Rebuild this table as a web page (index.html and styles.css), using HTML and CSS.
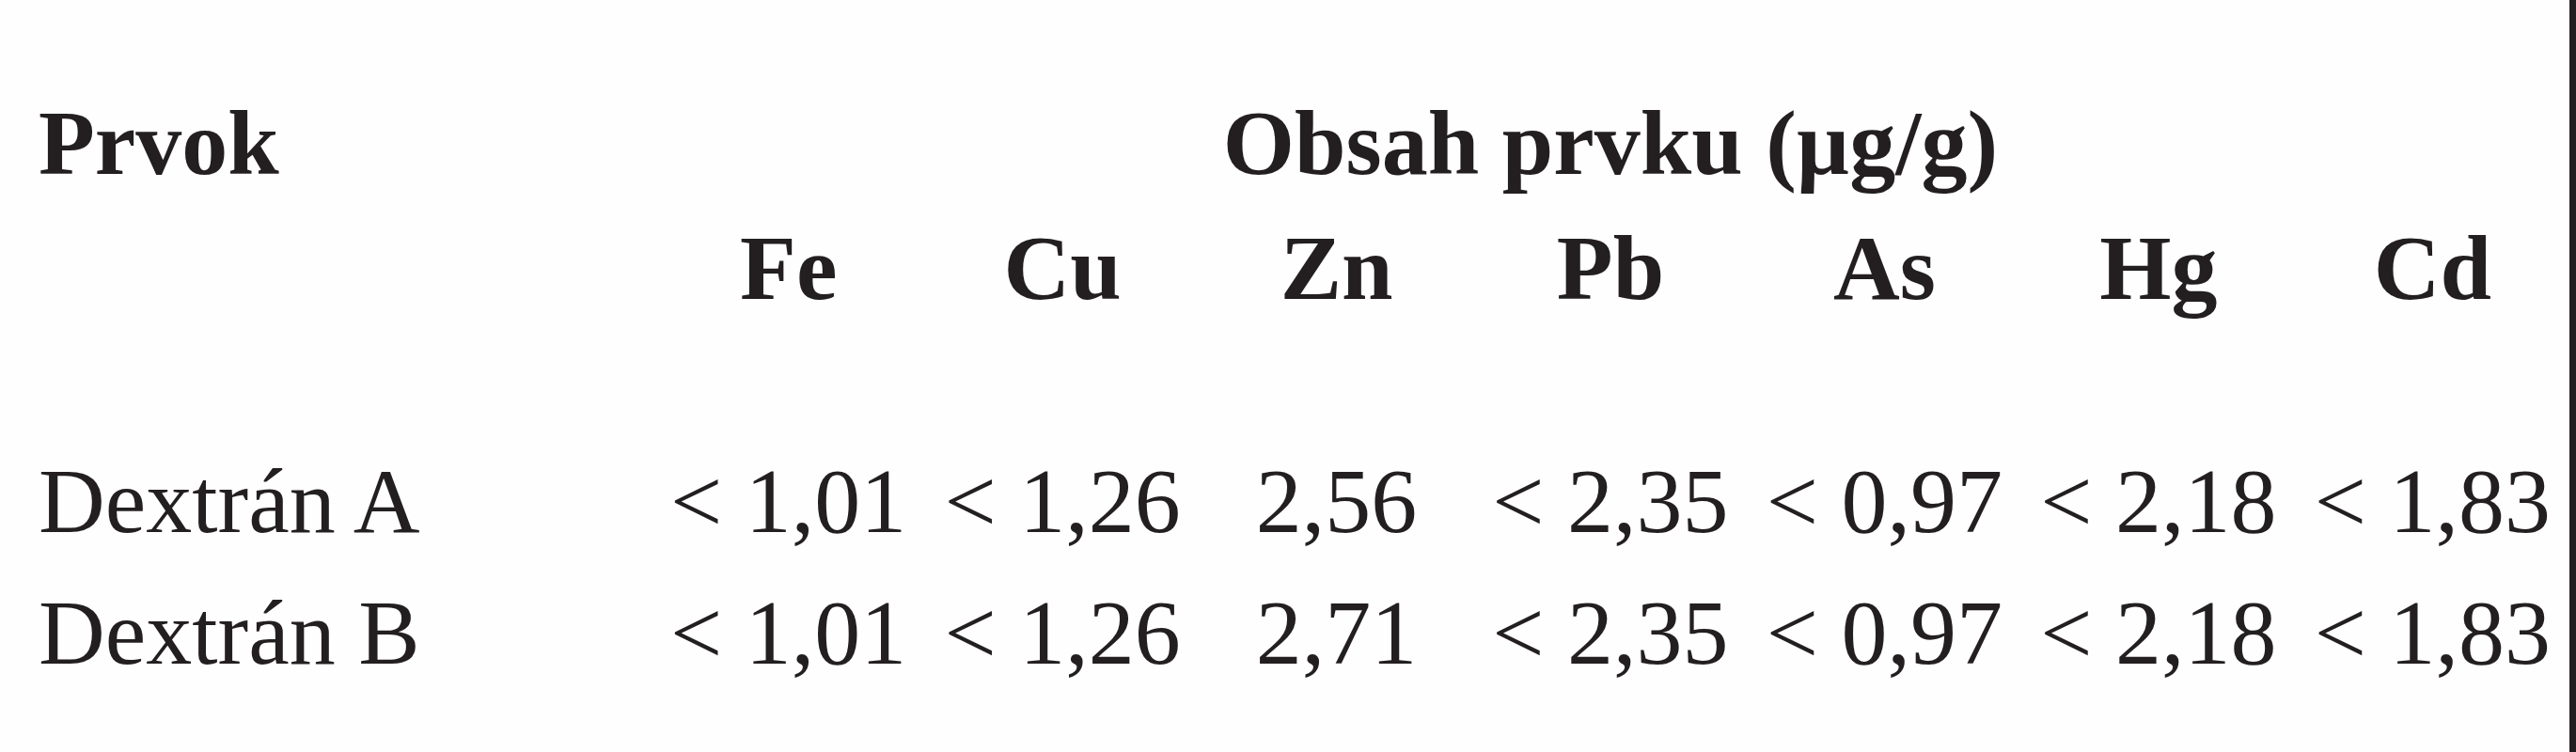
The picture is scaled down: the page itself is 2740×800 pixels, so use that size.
FILE: index.html
```html
<!DOCTYPE html>
<html lang="cs">
<head>
<meta charset="utf-8">
<title>Obsah prvku</title>
<link rel="stylesheet" href="styles.css">
</head>
<body>
<div class="page">
  <div class="sheet">
    <div class="grid head">
      <div class="cell first">Prvok</div>
      <div class="cell span">Obsah prvku (µg/g)</div>
      <div class="cell first"></div>
      <div class="cell">Fe</div>
      <div class="cell">Cu</div>
      <div class="cell">Zn</div>
      <div class="cell">Pb</div>
      <div class="cell">As</div>
      <div class="cell">Hg</div>
      <div class="cell">Cd</div>
    </div>
    <div class="grid body">
      <div class="cell first">Dextrán A</div>
      <div class="cell">&lt; 1,01</div>
      <div class="cell">&lt; 1,26</div>
      <div class="cell">2,56</div>
      <div class="cell">&lt; 2,35</div>
      <div class="cell">&lt; 0,97</div>
      <div class="cell">&lt; 2,18</div>
      <div class="cell">&lt; 1,83</div>
      <div class="cell first">Dextrán B</div>
      <div class="cell">&lt; 1,01</div>
      <div class="cell">&lt; 1,26</div>
      <div class="cell">2,71</div>
      <div class="cell">&lt; 2,35</div>
      <div class="cell">&lt; 0,97</div>
      <div class="cell">&lt; 2,18</div>
      <div class="cell">&lt; 1,83</div>
    </div>
  </div>
  <div class="edge"></div>
</div>
</body>
</html>
```

FILE: styles.css
```css
html, body {
  margin: 0;
  padding: 0;
  background: #fefefe;
}

.page {
  display: flex;
  width: 2740px;
  height: 800px;
  overflow: hidden;
  font-family: "Liberation Serif", "Times New Roman", serif;
  font-size: 98px;
  color: #231f20;
}

.sheet {
  flex: 1;
  padding: 86px 0 0 41px;
  box-sizing: border-box;
}

.grid {
  display: grid;
  grid-template-columns: 652px repeat(7, 1fr);
  white-space: nowrap;
}

.head {
  font-weight: bold;
  grid-auto-rows: 133px;
  line-height: 133px;
}

.body {
  margin-top: 111px;
  grid-auto-rows: 140px;
  line-height: 140px;
}

.cell {
  text-align: center;
}

.cell.first {
  text-align: left;
}

.cell.span {
  grid-column: 2 / span 7;
}

.edge {
  width: 7px;
  flex: none;
  background: #231f20;
}
```
